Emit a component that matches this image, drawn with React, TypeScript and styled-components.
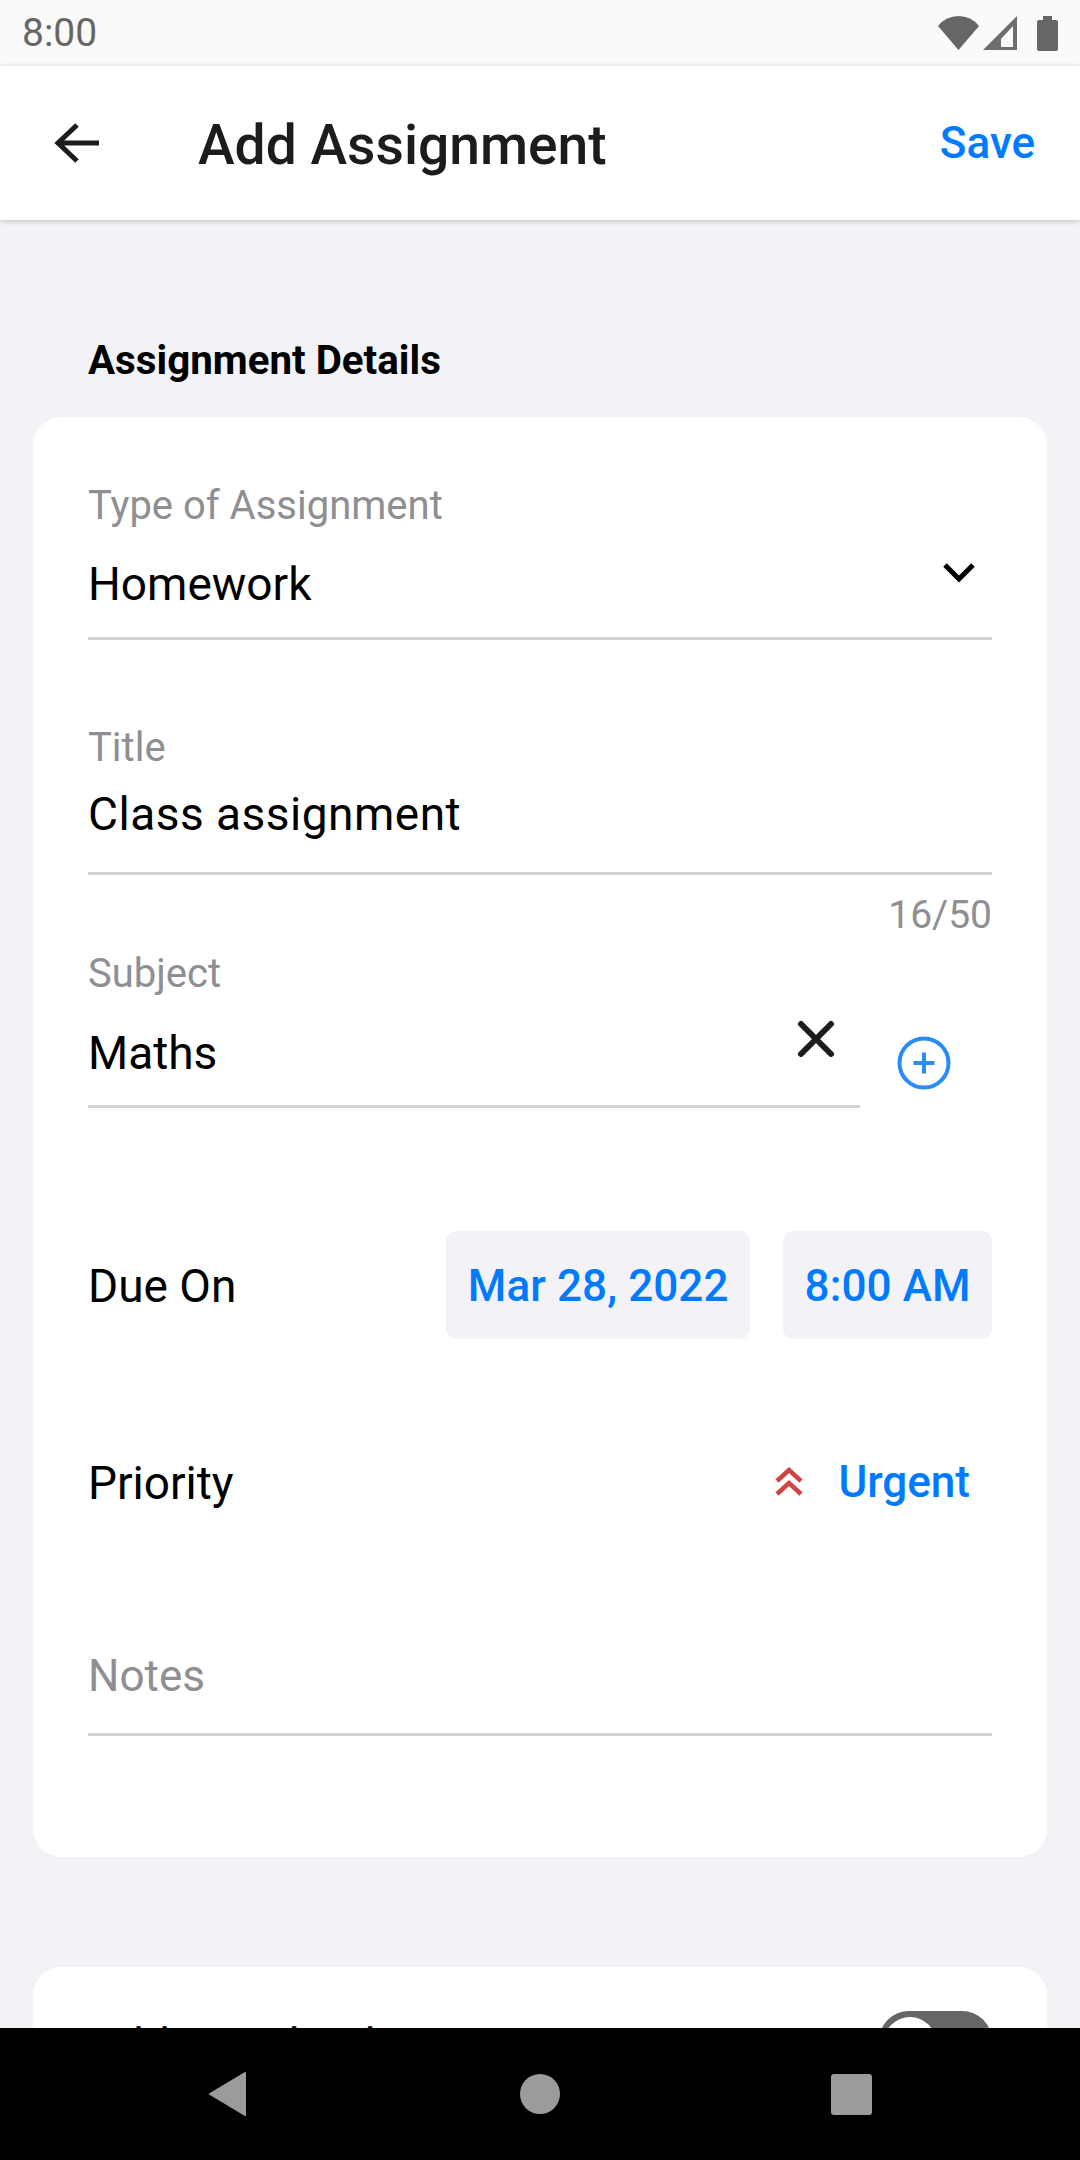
import React from 'react';
import styled, { createGlobalStyle } from 'styled-components';

const GlobalStyle = createGlobalStyle`
  * {
    box-sizing: border-box;
  }
  html, body {
    margin: 0;
    padding: 0;
    background: #f2f2f7;
    font-family: Roboto, "Noto Sans", sans-serif;
  }
`;

const Screen = styled.div`
  width: 1080px;
  height: 2160px;
  display: flex;
  flex-direction: column;
  overflow: hidden;
  background: #f2f2f7;
`;

const StatusBar = styled.div`
  height: 66px;
  flex: none;
  background: #fafafa;
  display: flex;
  align-items: center;
  justify-content: space-between;
  padding: 0 22px;
  color: #666;
  font-size: 39px;
`;

const StatusIcons = styled.div`
  display: flex;
  align-items: center;
  gap: 4px;
`;

const BatteryIcon = styled.svg`
  margin-left: 16px;
`;

const AppBar = styled.div`
  height: 154px;
  flex: none;
  background: #fff;
  box-shadow: 0 1px 5px rgba(0, 0, 0, 0.22);
  display: flex;
  align-items: center;
  padding: 0 45px 0 54px;
  position: relative;
`;

const PageTitle = styled.div`
  flex: 1;
  margin-left: 98px;
  padding-top: 3px;
  font-size: 55.2px;
  font-weight: 500;
  color: #1c1c1e;
`;

const SaveLink = styled.div`
  font-size: 44px;
  font-weight: 500;
  color: #007aff;
`;

const Content = styled.div`
  flex: 1;
  min-height: 0;
  overflow: hidden;
  padding: 118px 33px 0;
`;

const SectionTitle = styled.div`
  margin: 0 0 34px 55px;
  font-size: 40.3px;
  line-height: 45px;
  font-weight: 700;
  color: #000;
`;

const Card = styled.div`
  background: #fff;
  border-radius: 28px;
  padding: 66px 55px 0;
  height: 1440px;
  margin-bottom: 110px;
`;

const ToggleCard = styled(Card)`
  height: 300px;
  margin: 0;
  padding: 44px 55px 0;
  display: flex;
  align-items: flex-start;
  justify-content: space-between;
`;

const Field = styled.div<{ $height: number; $gap?: number }>`
  height: ${p => p.$height}px;
  margin-bottom: ${p => p.$gap ?? 0}px;
  border-bottom: 3px solid #d1d1d6;
  position: relative;
`;

const FieldLabel = styled.div`
  font-size: 40px;
  line-height: 45px;
  color: #8e8e93;
`;

const FieldValue = styled.div<{ $top: number; $spacing?: number }>`
  font-size: 46px;
  line-height: 52px;
  letter-spacing: ${p => p.$spacing ?? 0}px;
  color: #000;
  margin-top: ${p => p.$top}px;
`;

const Counter = styled.div`
  text-align: right;
  font-size: 39px;
  line-height: 45px;
  color: #8e8e93;
  margin-top: 18px;
`;

const SubjectRow = styled.div`
  display: flex;
  align-items: flex-start;
  margin-top: 13px;
`;

const SubjectField = styled.div`
  width: 772px;
  flex: none;
`;

const ClearButton = styled.div`
  position: absolute;
  right: 21px;
  top: 65px;
  width: 46px;
  height: 46px;
`;

const AddButton = styled.div`
  margin: 85px 0 0 37px;
  width: 54px;
  height: 54px;
`;

const ChevronBox = styled.div`
  position: absolute;
  right: 13px;
  top: 76px;
  width: 40px;
  height: 40px;
`;

const Row = styled.div<{ $top: number }>`
  display: flex;
  align-items: center;
  justify-content: space-between;
  margin-top: ${p => p.$top}px;
`;

const RowLabel = styled.div`
  font-size: 46px;
  line-height: 52px;
  padding-top: 2px;
  color: #000;
`;

const Chips = styled.div`
  display: flex;
  gap: 33px;
`;

const Chip = styled.div`
  height: 108px;
  padding: 2px 21.5px 0;
  background: #f2f2f7;
  border-radius: 10px;
  display: flex;
  align-items: center;
  font-size: 44px;
  font-weight: 500;
  letter-spacing: 0.1px;
  color: #007aff;
`;

const PriorityValue = styled.div`
  display: flex;
  align-items: center;
  gap: 33px;
  padding-right: 22px;
  font-size: 44px;
  line-height: 52px;
  font-weight: 500;
  color: #007aff;
`;

const NotesField = styled(Field)`
  margin-top: 141px;
`;

const Placeholder = styled.div`
  font-size: 44px;
  line-height: 52px;
  color: #8e8e93;
`;

const ToggleLabel = styled.div`
  font-size: 46px;
  line-height: 52px;
  color: #000;
  margin-top: 8px;
`;

const Toggle = styled.div`
  width: 113px;
  height: 60px;
  border-radius: 30px;
  background: #666;
  position: relative;
`;

const ToggleKnob = styled.div`
  position: absolute;
  left: 5px;
  top: 6px;
  width: 52px;
  height: 52px;
  border-radius: 50%;
  background: #fff;
`;

const NavBar = styled.div`
  height: 132px;
  flex: none;
  background: #000;
  display: flex;
  align-items: center;
  justify-content: center;
  gap: 271px;
`;

export default function App() {
  return (
    <>
      <GlobalStyle />
      <Screen>
        <StatusBar>
          <span>8:00</span>
          <StatusIcons>
            <svg width="41" height="34" viewBox="0 0 41 34">
              <path d="M20.5 34 L0 10 Q8 0 20.5 0 Q33 0 41 10 Z" fill="#666" />
            </svg>
            <svg width="34" height="34" viewBox="0 0 34 34">
              <path d="M34 0 V34 H0 Z M18 23 L30 10 V31 H18 Z" fill="#6e6e6e" fillRule="evenodd" />
            </svg>
            <BatteryIcon width="21" height="35" viewBox="0 0 21 35">
              <path d="M6 0 H15 V4 H19 Q21 4 21 6 V33 Q21 35 19 35 H2 Q0 35 0 33 V6 Q0 4 2 4 H6 Z" fill="#666" />
            </BatteryIcon>
          </StatusIcons>
        </StatusBar>
        <AppBar>
          <svg width="46" height="44" viewBox="0 0 46 44">
            <path d="M45 22 H4 M23 4 L4 22 L23 40" fill="none" stroke="#1c1c1e" strokeWidth="5" />
          </svg>
          <PageTitle>Add Assignment</PageTitle>
          <SaveLink>Save</SaveLink>
        </AppBar>
        <Content>
          <SectionTitle>Assignment Details</SectionTitle>
          <Card>
            <Field $height={157} $gap={85}>
              <FieldLabel>Type of Assignment</FieldLabel>
              <FieldValue $top={30}>Homework</FieldValue>
              <ChevronBox>
                <svg width="40" height="40" viewBox="0 0 40 40">
                  <path d="M6 6 L20 20 L34 6" fill="none" stroke="#000" strokeWidth="5" />
                </svg>
              </ChevronBox>
            </Field>
            <Field $height={150}>
              <FieldLabel>Title</FieldLabel>
              <FieldValue $top={18} $spacing={0.5}>Class assignment</FieldValue>
            </Field>
            <Counter>16/50</Counter>
            <SubjectRow>
              <SubjectField>
                <Field $height={157}>
                  <FieldLabel>Subject</FieldLabel>
                  <FieldValue $top={31}>Maths</FieldValue>
                  <ClearButton>
                    <svg width="46" height="46" viewBox="0 0 46 46">
                      <path d="M8 8 L38 38 M38 8 L8 38" fill="none" stroke="#1c1c1e" strokeWidth="6" strokeLinecap="round" />
                    </svg>
                  </ClearButton>
                </Field>
              </SubjectField>
              <AddButton>
                <svg width="54" height="54" viewBox="0 0 54 54">
                  <circle cx="27" cy="27" r="24.5" fill="none" stroke="#2a8cf7" strokeWidth="4" />
                  <path d="M27 16.5 V37.5 M16.5 27 H37.5" fill="none" stroke="#2a8cf7" strokeWidth="4" />
                </svg>
              </AddButton>
            </SubjectRow>
            <Row $top={123}>
              <RowLabel>Due On</RowLabel>
              <Chips>
                <Chip>Mar 28, 2022</Chip>
                <Chip>8:00 AM</Chip>
              </Chips>
            </Row>
            <Row $top={116}>
              <RowLabel>Priority</RowLabel>
              <PriorityValue>
                <svg width="32" height="30" viewBox="0 0 32 30">
                  <path d="M4 14 L16 3 L28 14 M4 27 L16 16 L28 27" fill="none" stroke="#cf4446" strokeWidth="4.5" />
                </svg>
                Urgent
              </PriorityValue>
            </Row>
            <NotesField $height={86}>
              <Placeholder>Notes</Placeholder>
            </NotesField>
          </Card>
          <ToggleCard>
            <ToggleLabel>Add to Calendar</ToggleLabel>
            <Toggle>
              <ToggleKnob />
            </Toggle>
          </ToggleCard>
        </Content>
        <NavBar>
          <svg width="40" height="46" viewBox="0 0 40 46">
            <path d="M36 2 V44 L1 23 Z" fill="#9b9b9b" stroke="#9b9b9b" strokeWidth="2" strokeLinejoin="round" />
          </svg>
          <svg width="40" height="40" viewBox="0 0 40 40">
            <circle cx="20" cy="20" r="20" fill="#9b9b9b" />
          </svg>
          <svg width="41" height="41" viewBox="0 0 41 41">
            <rect width="41" height="41" rx="3" fill="#9b9b9b" />
          </svg>
        </NavBar>
      </Screen>
    </>
  );
}
